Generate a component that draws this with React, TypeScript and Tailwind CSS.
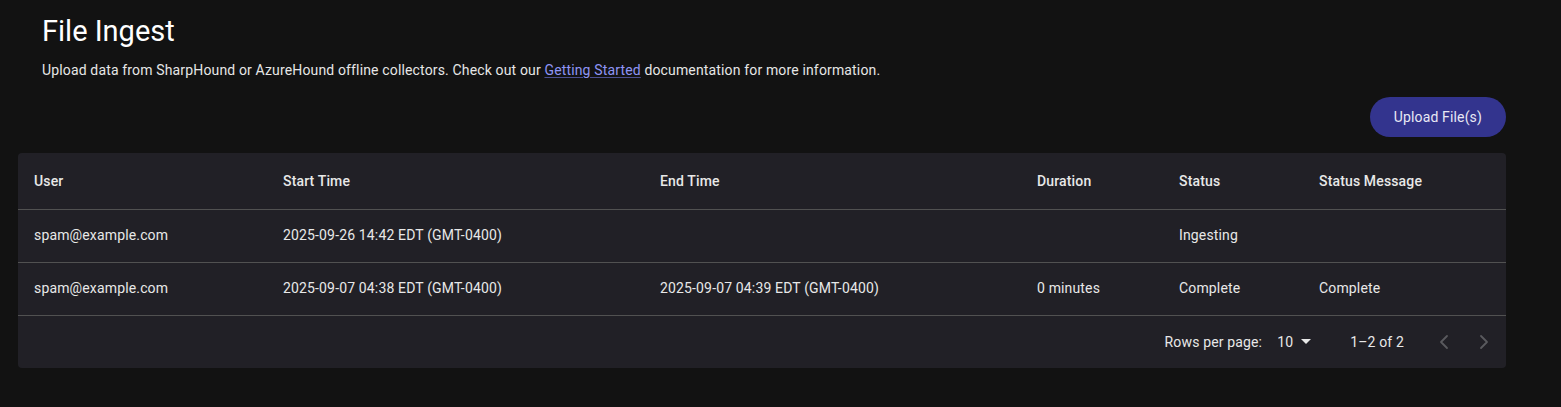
import { ChevronLeft, ChevronRight } from 'lucide-react'

const rows = [
  { user: 'spam@example.com', start: '2025-09-26 14:42 EDT (GMT-0400)', end: '', duration: '', status: 'Ingesting', message: '' },
  { user: 'spam@example.com', start: '2025-09-07 04:38 EDT (GMT-0400)', end: '2025-09-07 04:39 EDT (GMT-0400)', duration: '0 minutes', status: 'Complete', message: 'Complete' },
]

export default function App() {
  return (
    <div className="min-h-[407px] w-full bg-[#121212] text-[#e8e8e8] font-['Roboto',sans-serif] tracking-[0.15px]">
      <div className="pl-[18px] pr-[55px] pt-[13px]">
        <div className="px-6">
          <h1 className="text-[29px] leading-[36px] font-normal tracking-normal text-white">File Ingest</h1>
          <p className="mt-[11px] text-sm leading-5 text-[#e6e6e6]">
            Upload data from SharpHound or AzureHound offline collectors. Check out our{' '}
            <a className="text-[#8f95f5] underline decoration-[#4b4f8f] underline-offset-[2px]">Getting Started</a>{' '}
            documentation for more information.
          </p>
        </div>
        <div className="mt-[17px] flex justify-end">
          <button className="h-10 rounded-full bg-[#33348e] px-6 text-sm text-[#e8e8f4]">Upload File(s)</button>
        </div>
        <div className="mt-4 rounded bg-[#212026] overflow-hidden">
          <table className="w-full text-sm border-collapse table-fixed">
            <colgroup>
              <col className="w-[249px]" />
              <col className="w-[377px]" />
              <col className="w-[377px]" />
              <col className="w-[142px]" />
              <col className="w-[140px]" />
              <col />
            </colgroup>
            <thead>
              <tr className="h-14 border-b border-[#515151] text-left">
                <th className="px-4 font-medium">User</th>
                <th className="px-4 font-medium">Start Time</th>
                <th className="px-4 font-medium">End Time</th>
                <th className="px-4 font-medium">Duration</th>
                <th className="px-4 font-medium">Status</th>
                <th className="px-4 font-medium">Status Message</th>
              </tr>
            </thead>
            <tbody>
              {rows.map((r, i) => (
                <tr key={i} className="h-[53px] border-b border-[#515151]">
                  <td className="px-4 pb-[2px]">{r.user}</td>
                  <td className="px-4 pb-[2px]">{r.start}</td>
                  <td className="px-4 pb-[2px]">{r.end}</td>
                  <td className="px-4 pb-[2px]">{r.duration}</td>
                  <td className="px-4 pb-[2px]">{r.status}</td>
                  <td className="px-4 pb-[2px]">{r.message}</td>
                </tr>
              ))}
            </tbody>
          </table>
          <div className="flex h-[52px] items-center justify-end pr-[10px] text-sm">
            <span>Rows per page:</span>
            <span className="ml-[15px] flex items-center">
              10
              <svg className="ml-[8px]" width="10" height="5" viewBox="0 0 10 5"><path d="M0 0l5 5 5-5z" fill="#e8e8e8" /></svg>
            </span>
            <span className="ml-[39px]">1–2 of 2</span>
            <div className="ml-[28px] flex items-center gap-4">
              <ChevronLeft className="h-6 w-6 text-[#5a5a5e]" strokeWidth={1.8} />
              <ChevronRight className="h-6 w-6 text-[#5a5a5e]" strokeWidth={1.8} />
            </div>
          </div>
        </div>
      </div>
    </div>
  )
}
